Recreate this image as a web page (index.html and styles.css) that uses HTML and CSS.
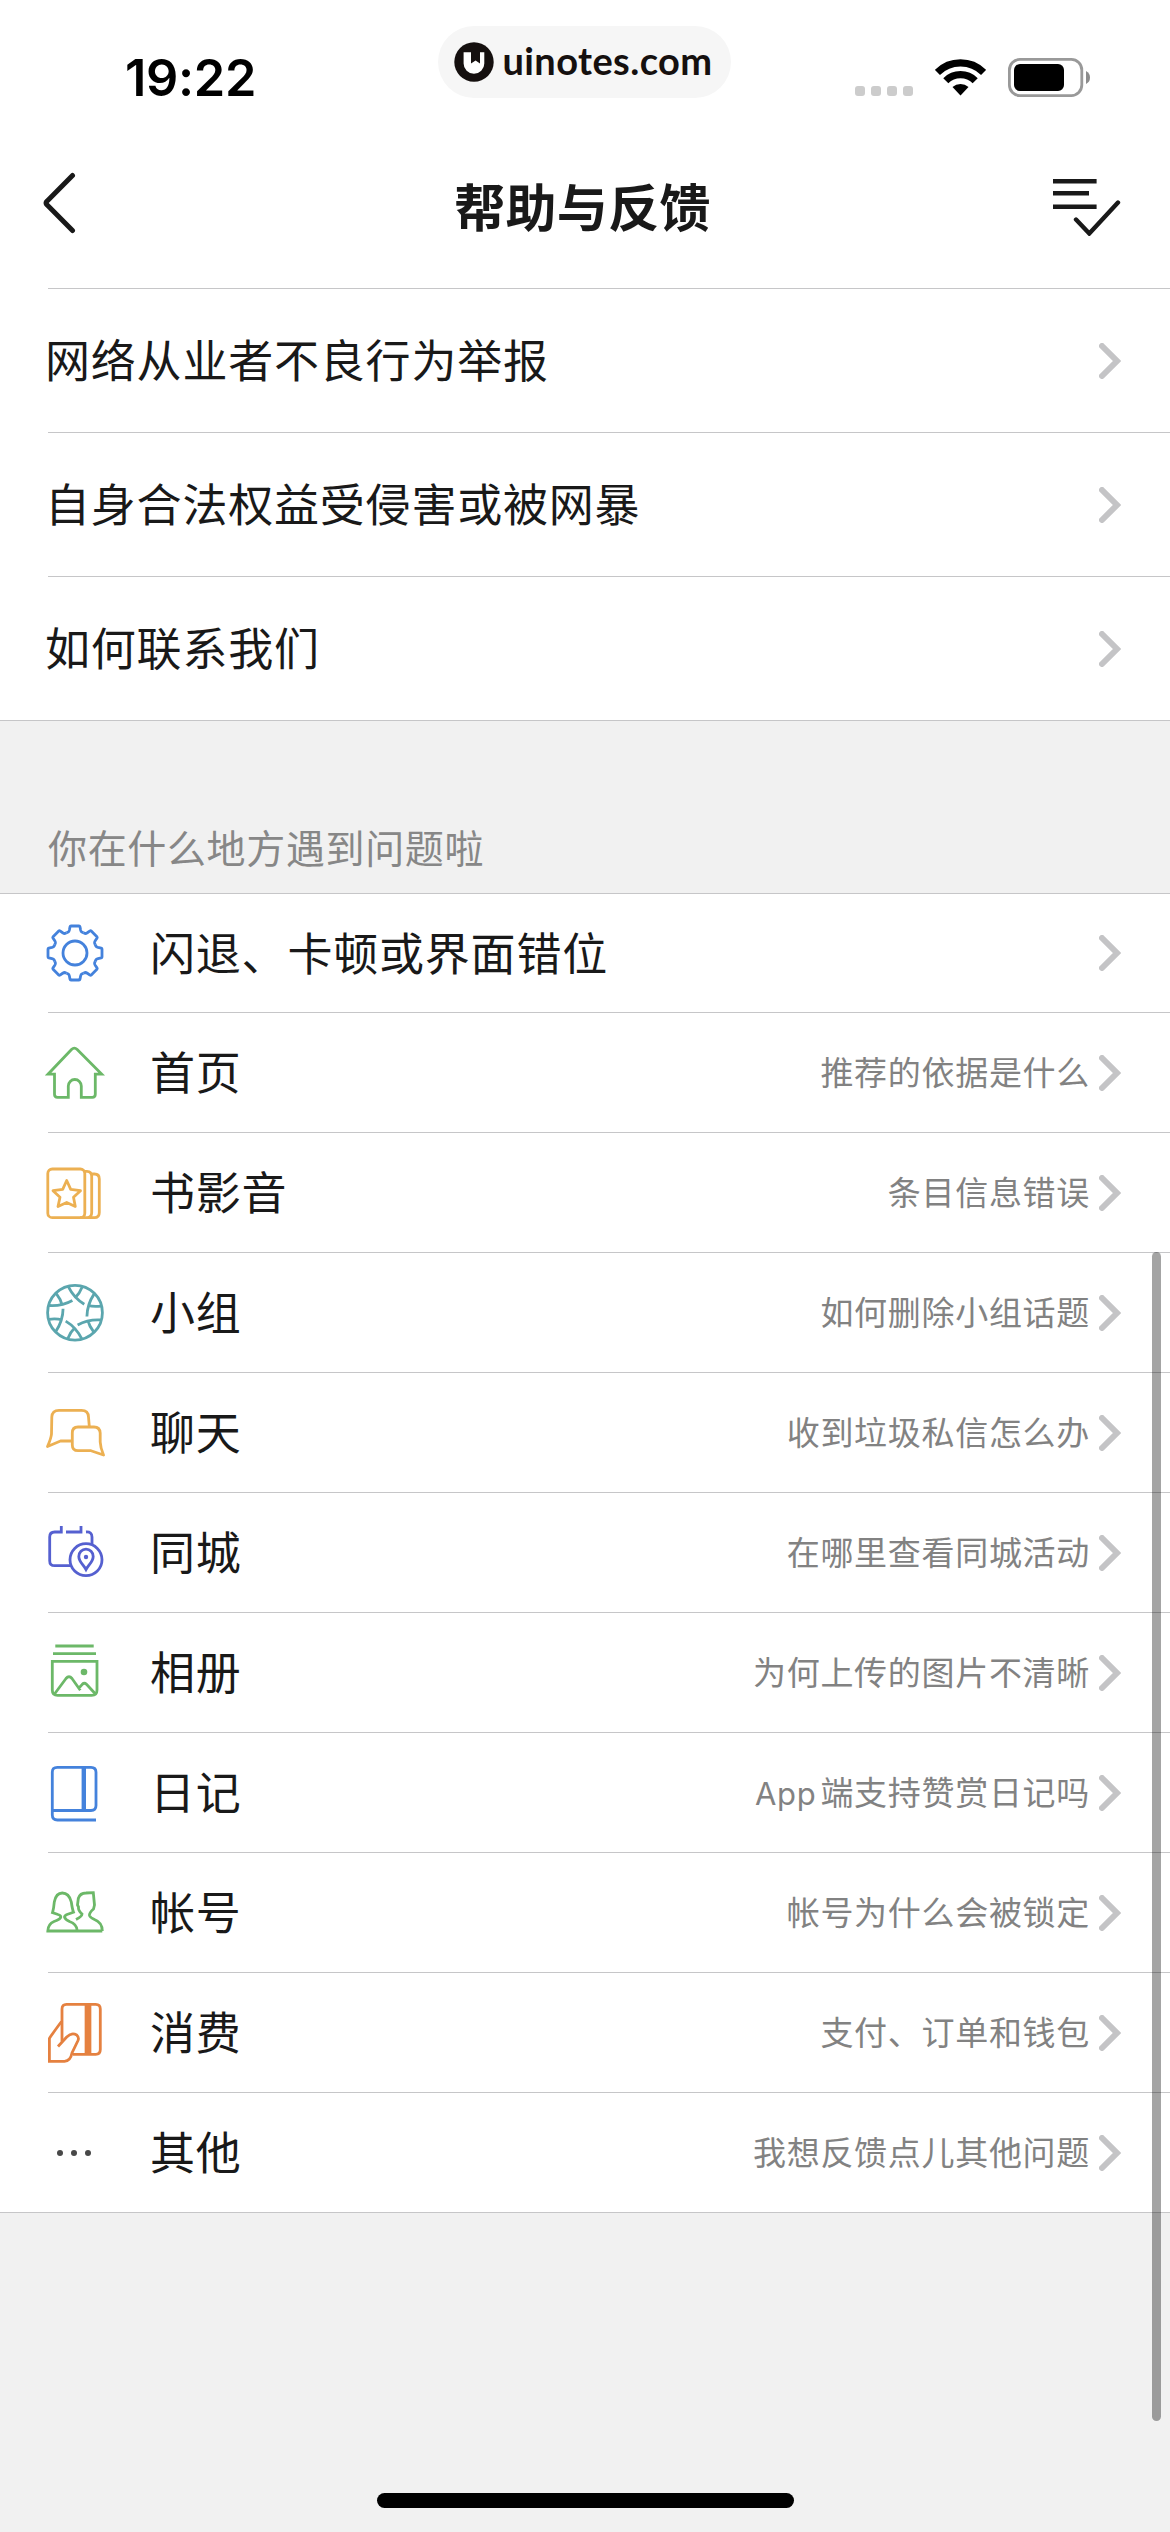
FILE: index.html
```html
<!DOCTYPE html>
<html lang="zh-CN">

	<head>
		<meta charset="UTF-8">
		<title>帮助与反馈</title>
		<link rel="stylesheet" href="styles.css">
	</head>

	<body>
		<svg class="defs">
			<symbol id="arrow" viewBox="0 0 22 36">
				<path d="M3 3L18 18L3 33" fill="none" stroke="#c4c4c6" stroke-width="6" stroke-linecap="round" />
			</symbol>
			<path id="tooth" d="M-8.4-20.2L-6.8-20.9Q-6-21.3-5.6-23L-5-26.2Q-4.8-27-4-27H4Q4.8-27 5-26.2L5.6-23Q6-21.3 6.8-20.9L8.4-20.2" />
			<path id="seam" d="M-6.7-26Q-1-14.5 9.3-8.4M7.3-26Q4.5-19 0-14.7" />
		</svg>

		<header>
			<div class="status">
				<span class="clock">19:22</span>
				<div class="brand">
					<svg width="40" height="40" viewBox="0 0 40 40">
						<circle cx="20" cy="20" r="19.7" fill="#15100f" />
						<path d="M9.6 10.2H17V21.4L21.6 18.4L26 21.4V10.2H30.3V21.5A10.3 10.3 0 0 1 9.6 21.5Z" fill="#fff" />
					</svg>
					<span>uinotes.com</span>
				</div>
				<div class="signal"><i></i><i></i><i></i><i></i></div>
				<svg class="wifi" width="51" height="37" viewBox="0 0 51 37">
					<path d="M2.4 13.4A32.7 32.7 0 0 1 48.6 13.4M10.8 21.8A20.8 20.8 0 0 1 40.2 21.8" fill="none" stroke="#000" stroke-width="7.2" />
					<path d="M17.5 28A12 12 0 0 1 33.5 28L25.5 36.5Z" />
				</svg>
				<svg class="battery" width="83" height="39" viewBox="0 0 83 39">
					<rect x="1.4" y="1.4" width="72.4" height="36.2" rx="10.5" fill="none" stroke="#999" stroke-width="2.8" />
					<rect x="6" y="6" width="50" height="27" rx="6" />
					<path d="M78 13Q82 15 82 19.5T78 26Z" fill="#8c8c8c" />
				</svg>
			</div>
			<div class="nav">
				<svg class="back" width="34" height="62" viewBox="0 0 34 62">
					<path d="M30.5 3.5L5 29.2Q3 31 5 32.8L30.5 58.5" fill="none" stroke="#191919" stroke-width="5" stroke-linecap="round" />
				</svg>
				<h1>帮助与反馈</h1>
				<svg class="record" width="68" height="58" viewBox="0 0 68 58">
					<path d="M0 3.3H43.6M0 15.3H36M0 28.7H43.6" stroke="#191919" stroke-width="4.4" />
					<path d="M23 41.5L36.3 55.5L65 24.5" fill="none" stroke="#191919" stroke-width="4.4" stroke-linecap="round" />
				</svg>
			</div>
		</header>

		<ul class="list faq">
			<li><span>网络从业者不良行为举报</span><svg class="arrow"><use href="#arrow" /></svg></li>
			<li><span>自身合法权益受侵害或被网暴</span><svg class="arrow"><use href="#arrow" /></svg></li>
			<li><span>如何联系我们</span><svg class="arrow"><use href="#arrow" /></svg></li>
		</ul>

		<h2>你在什么地方遇到问题啦</h2>

		<ul class="list topic">
			<li class="first">
				<svg class="icon blue" viewBox="0 0 60 60">
					<g transform="translate(30 30)">
						<circle r="12" />
						<use href="#tooth" />
						<use href="#tooth" transform="rotate(45)" />
						<use href="#tooth" transform="rotate(90)" />
						<use href="#tooth" transform="rotate(135)" />
						<use href="#tooth" transform="rotate(180)" />
						<use href="#tooth" transform="rotate(225)" />
						<use href="#tooth" transform="rotate(270)" />
						<use href="#tooth" transform="rotate(315)" />
					</g>
				</svg>
				<span>闪退、卡顿或界面错位</span>
				<em></em>
				<svg class="arrow"><use href="#arrow" /></svg>
			</li>
			<li>
				<svg class="icon green" viewBox="0 0 60 61">
					<path d="M26.5 7.5L3 32.2H9.5V52.3Q9.5 55.3 12.5 55.3H23.3V44A6.5 6.5 0 0 1 36.3 44V55.3H47.3Q50.3 55.3 50.3 52.3V32.2H56.8L32.2 7.5Q29.3 4.8 26.5 7.5Z" />
				</svg>
				<span>首页</span>
				<em>推荐的依据是什么</em>
				<svg class="arrow"><use href="#arrow" /></svg>
			</li>
			<li>
				<svg class="icon yellow" viewBox="0 0 60 61">
					<rect x="2.8" y="7" width="37" height="48.7" rx="4.5" />
					<path d="M38.5 9.3H42Q46.7 9.3 46.7 14.5V50.5Q46.7 55.7 42 55.7M46 12H49.5Q54.3 12 54.3 17V50.5Q54.3 55.7 49.5 55.7H35" />
					<path d="M21.7 18.5L25.7 27.3L35.5 28.7L28.5 35.3L30.3 44.5L21.7 40.5L13 44.5L15 35.3L8 28.7L17.7 27.3Z" stroke-linejoin="round" />
				</svg>
				<span>书影音</span>
				<em>条目信息错误</em>
				<svg class="arrow"><use href="#arrow" /></svg>
			</li>
			<li>
				<svg class="icon teal" viewBox="0 0 60 61">
					<g transform="translate(30 30.7)">
						<circle r="27.4" />
						<use href="#seam" />
						<use href="#seam" transform="rotate(60)" />
						<use href="#seam" transform="rotate(120)" />
						<use href="#seam" transform="rotate(180)" />
						<use href="#seam" transform="rotate(240)" />
						<use href="#seam" transform="rotate(300)" />
					</g>
				</svg>
				<span>小组</span>
				<em>如何删除小组话题</em>
				<svg class="arrow"><use href="#arrow" /></svg>
			</li>
			<li>
				<svg class="icon yellow" viewBox="0 0 60 61">
					<g stroke-linejoin="round">
						<path d="M27 39H15.5L2.5 44.5Q6.2 36 6.5 32L6.8 15Q7.2 8.3 14 8.3H36.5Q43.3 8.3 43.5 15L44.3 24.5" />
						<path d="M33 25H49Q54.8 25 55.2 31V40Q55.5 46 58.5 53L46 48.7H33Q27.3 48.7 27.3 43V31Q27.3 25 33 25Z" />
					</g>
				</svg>
				<span>聊天</span>
				<em>收到垃圾私信怎么办</em>
				<svg class="arrow"><use href="#arrow" /></svg>
			</li>
			<li>
				<svg class="icon purple" viewBox="0 0 60 61">
					<path d="M26 43.7H9.7Q4.7 43.7 4.7 38.7V15Q4.7 10 9.7 10H16.3V4M21 10H36V4M41 10Q47 9.5 47 15V22" />
					<circle cx="41" cy="37.7" r="16" />
					<path d="M41 47.5C38.5 43 33.8 39.5 33.8 34.4A7.2 7.2 0 0 1 48.2 34.4C48.2 39.5 43.5 43 41 47.5Z" />
					<circle class="dot" cx="41" cy="35" r="2.2" />
				</svg>
				<span>同城</span>
				<em>在哪里查看同城活动</em>
				<svg class="arrow"><use href="#arrow" /></svg>
			</li>
			<li>
				<svg class="icon green" viewBox="0 0 60 61">
					<path d="M10.3 4H48.7M8 11.7H51M7.3 19.3H52V48Q52 53.3 46.7 53.3H12.6Q7.3 53.3 7.3 48Z" />
					<path d="M9.5 52L21 36.5Q24 33 27 36.5L35.3 48.3M34 46L37 42.7Q39 40 41.5 42.3L50.5 52" />
					<circle class="dot" cx="39" cy="30" r="3.3" />
				</svg>
				<span>相册</span>
				<em>为何上传的图片不清晰</em>
				<svg class="arrow"><use href="#arrow" /></svg>
			</li>
			<li>
				<svg class="icon blue" viewBox="0 0 60 61">
					<path d="M12.3 5.3H46Q51 5.3 51 10.3V43.5Q51 48.5 46 48.5H7.3V10.3Q7.3 5.3 12.3 5.3ZM7.3 47V53Q7.3 58 12.5 58H51" />
					<path d="M38.8 5V48" stroke-width="4.4" />
				</svg>
				<span>日记</span>
				<em><i class="en">App</i>端支持赞赏日记吗</em>
				<svg class="arrow"><use href="#arrow" /></svg>
			</li>
			<li>
				<svg class="icon green" viewBox="0 0 60 61">
					<path d="M57.3 49H2.8Q3 42 9 39.5Q15.5 37.3 15.8 35Q15.8 33.3 13 32.5L7.5 30.7Q8.7 27 9.3 20Q11 11 17.3 11Q24 11 26.3 20Q27.3 27 28.5 30.2L22 32.5Q19.5 33.5 19.5 35Q20 37.5 24.5 39.5Q32 42 32.3 49" />
					<path d="M31 37.5Q37 34.5 37 32Q33 28.5 33.5 25L32.5 23L33.3 16.5Q35 11 41 11L48.3 10.7L49.5 23L48.5 27Q44 31 44.5 33.5Q45 35.5 49.5 37.5Q57.3 40.5 57.3 49" />
				</svg>
				<span>帐号</span>
				<em>帐号为什么会被锁定</em>
				<svg class="arrow"><use href="#arrow" /></svg>
			</li>
			<li>
				<svg class="icon orange" viewBox="0 0 60 61">
					<path d="M17 39.5V7Q17 2.3 21.5 2.3H50.7Q55.3 2.3 55.3 7V47.5Q55.3 52.3 50.7 52.3H28" />
					<path d="M43 2V52" stroke-width="6.7" />
					<path d="M13 44.5L21.7 35Q26.7 30 31.7 33Q34.3 35.5 33 38.5L27 51Q25.5 59 19.5 59.3H4.4V36.5Q5 35 16.5 19.5" />
				</svg>
				<span>消费</span>
				<em>支付、订单和钱包</em>
				<svg class="arrow"><use href="#arrow" /></svg>
			</li>
			<li>
				<svg class="icon gray" viewBox="0 0 60 61">
					<circle class="dot" cx="15" cy="31" r="3" />
					<circle class="dot" cx="29" cy="31" r="3" />
					<circle class="dot" cx="43" cy="31" r="3" />
				</svg>
				<span>其他</span>
				<em>我想反馈点儿其他问题</em>
				<svg class="arrow"><use href="#arrow" /></svg>
			</li>
		</ul>

		<div class="scrollbar"></div>
		<div class="home"></div>
	</body>

</html>
```
FILE: styles.css
```css
* {
	box-sizing: border-box;
	margin: 0;
	padding: 0;
}

body {
	position: relative;
	width: 1170px;
	height: 2532px;
	overflow: hidden;
	background-color: #f1f1f1;
	color: #191919;
	font-family: Inter, "Noto Sans CJK SC", sans-serif;
}

svg {
	display: block;
	flex: none;
}

.defs {
	position: absolute;
	width: 0;
	height: 0;
}

header {
	height: 288px;
	background-color: #fff;
}

/* 状态栏 */
.status {
	display: flex;
	align-items: flex-start;
	height: 141px;
	padding: 26px 79px 0 125px;
}

.clock {
	width: 314px;
	margin-top: 21px;
	line-height: 62px;
	font-size: 50.5px;
	font-weight: 600;
	letter-spacing: -0.3px;
	color: #000;
}

.brand {
	display: flex;
	align-items: center;
	width: 293px;
	height: 72px;
	padding-left: 16px;
	border-radius: 36px;
	background-color: #f6f6f6;
	color: #15100f;
	font: bold 38px Lato, sans-serif;
	letter-spacing: 0.4px;
}

.brand span {
	margin: -4px 0 0 8px;
}

.signal {
	display: flex;
	gap: 6px;
	margin: 60px 22px 0 124px;
}

.signal i {
	width: 10px;
	height: 10px;
	border-radius: 3px;
	background-color: #ccc;
}

.wifi {
	margin: 33px 22px 0 0;
}

.battery {
	margin-top: 32px;
}

/* 导航栏 */
.nav {
	display: flex;
	align-items: center;
	justify-content: space-between;
	height: 132px;
	padding: 0 49px 0 42px;
}

.nav h1 {
	margin-top: -5px;
	padding-left: 36px;
	font-size: 51px;
	font-weight: 600;
	letter-spacing: 0.3px;
}

.back {
	margin-top: -8px;
}

.record {
	margin-top: -1px;
}

/* 列表 */
.list {
	list-style: none;
	background-color: #fff;
	border-bottom: 1px solid #c6c6c8;
}

.list li {
	display: flex;
	align-items: center;
	height: 120px;
	margin-left: 48px;
	padding-right: 49px;
	border-top: 1px solid #c6c6c8;
}

.list span {
	flex: none;
	margin-top: -4px;
	font-size: 45px;
	letter-spacing: 0.8px;
}

.list .arrow {
	width: 22px;
	height: 36px;
}

.faq li {
	height: 144px;
	justify-content: space-between;
}

.faq span {
	margin-left: -3px;
}

h2 {
	height: 172px;
	padding: 99px 0 0 48px;
	line-height: 58px;
	font-size: 39px;
	font-weight: normal;
	letter-spacing: 0.65px;
	color: #878787;
}

.topic {
	border-top: 1px solid #c6c6c8;
}

.topic li.first {
	height: 118px;
	border-top: 0;
}

.topic span {
	margin-left: 45px;
}

.topic em {
	flex: 1;
	margin: -4px 9px 0 0;
	text-align: right;
	font-size: 33px;
	font-style: normal;
	letter-spacing: 0.7px;
	color: #828282;
}

.topic .en {
	margin-right: 4px;
	font-size: 31px;
	font-style: normal;
}

.icon {
	width: 60px;
	height: 61px;
	margin-left: -3px;
	fill: none;
	stroke: currentColor;
	stroke-width: 2.8;
}

.first .icon {
	height: 60px;
}

.icon .dot {
	fill: currentColor;
	stroke: none;
}

.blue {
	color: #4482dc;
}

.green {
	color: #6cb868;
}

.yellow {
	color: #ecb052;
}

.teal {
	color: #5ba6ae;
}

.purple {
	color: #5560d0;
}

.orange {
	color: #e58140;
}

.gray {
	color: #484848;
}

.scrollbar {
	position: absolute;
	top: 1252px;
	right: 9px;
	width: 9px;
	height: 1169px;
	border-radius: 5px;
	background-color: rgba(0, 0, 0, 0.355);
}

.home {
	position: absolute;
	bottom: 24px;
	left: 377px;
	width: 417px;
	height: 15px;
	border-radius: 8px;
	background-color: #000;
}
```
